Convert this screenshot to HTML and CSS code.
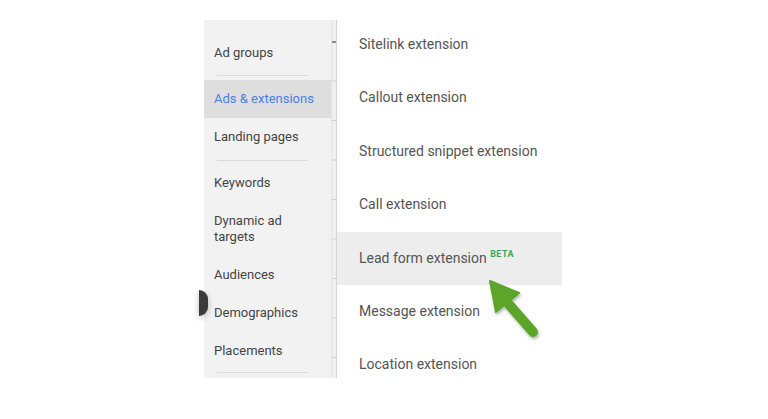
FILE: index.html
```html
<!doctype html>
<html lang="en">
  <head>
    <meta charset="UTF-8" />
    <meta name="viewport" content="width=device-width, initial-scale=1.0" />
    <title>Ads &amp; extensions</title>
    <link rel="stylesheet" href="styles.css">
  </head>
  <body>
    <div class="layout">
      <nav class="side-nav">
        <div class="nav-item first">Ad groups</div>
        <div class="nav-divider"></div>
        <div class="nav-item active">Ads &amp; extensions</div>
        <div class="nav-item">Landing pages</div>
        <div class="nav-divider mid"></div>
        <div class="nav-item">Keywords</div>
        <div class="nav-item">Dynamic ad<br>targets</div>
        <div class="nav-item">Audiences</div>
        <div class="nav-item">Demographics</div>
        <div class="nav-item">Placements</div>
        <div class="nav-divider last"></div>
      </nav>

      <div class="table-edge"></div>

      <ul class="ext-menu">
        <li>Sitelink extension</li>
        <li>Callout extension</li>
        <li>Structured snippet extension</li>
        <li>Call extension</li>
        <li class="hover">Lead form extension <sup class="beta">BETA</sup></li>
        <li>Message extension</li>
        <li>Location extension</li>
      </ul>
    </div>

    <!-- half-hidden floating button behind the nav -->
    <div class="fab-peek"></div>

    <!-- annotation arrow -->
    <svg class="arrow" width="768" height="419" viewBox="0 0 768 419">
      <defs>
        <filter id="shadow" x="-20%" y="-20%" width="140%" height="140%">
          <feDropShadow dx="1" dy="2" stdDeviation="1.5" flood-color="#000" flood-opacity="0.3" />
        </filter>
      </defs>
      <g filter="url(#shadow)" fill="#5ba52b" stroke="#5ba52b">
        <line x1="506" y1="301" x2="533" y2="332" stroke-width="10" stroke-linecap="round" />
        <polygon points="490,281 519,293 496,312" stroke-width="2" stroke-linejoin="round" />
      </g>
    </svg>
  </body>
</html>
```

FILE: styles.css
```css
body {
  margin: 0;
  background: #fff;
  font-family: Roboto, "Noto Sans", sans-serif;
}

.layout {
  display: flex;
  align-items: flex-start;
  padding: 18px 0 0 204px;
}

.side-nav {
  width: 127px;
  margin-top: 2px;
  padding: 14px 0 0;
  background: #f2f2f2;
  font-size: 13px;
  color: #444;
}

.nav-item {
  padding: 11px 0 11px 10px;
  line-height: 16px;
}

.nav-item.active {
  background: #dedede;
  color: #4a80e8;
}

.nav-divider {
  height: 1px;
  margin: 3px 23px 4px 13px;
  background: #d9d9d9;
}

.nav-divider.mid {
  margin-top: 4px;
  margin-bottom: 3px;
}

.nav-divider.last {
  margin-top: 2px;
  margin-bottom: 5px;
}

.table-edge {
  width: 4px;
  height: 358px;
  margin-top: 2px;
  border-left: 1px solid #e6e6e6;
  border-right: 1px solid #d6d6d6;
  background:
    linear-gradient(#8a8a8a, #8a8a8a) 0 21px / 100% 2px no-repeat,
    repeating-linear-gradient(#f0f0f0 0 38.5px, #d2d2d2 38.5px 39.5px) 0 22px / 100% 39.5px,
    #f0f0f0;
}

.ext-menu {
  list-style: none;
  width: 225px;
  margin: 0;
  padding: 0;
  background: #fff;
  font-size: 14px;
  color: #555;
}

.ext-menu li {
  height: 53.4px;
  line-height: 53.4px;
  padding-left: 22px;
}

.ext-menu li.hover {
  background: #ededed;
}

.beta {
  font-size: 9px;
  font-weight: 700;
  color: #3aa757;
  letter-spacing: 0.4px;
  vertical-align: 6px;
  line-height: 0;
}

.fab-peek {
  position: absolute;
  left: 199px;
  top: 290px;
  width: 9px;
  height: 26px;
  border-radius: 0 13px 13px 0 / 0 13px 13px 0;
  background: #3b3b3b;
  box-shadow: 0 2px 6px rgba(0, 0, 0, 0.25);
}

.arrow {
  position: absolute;
  left: 0;
  top: 0;
  pointer-events: none;
}
```
